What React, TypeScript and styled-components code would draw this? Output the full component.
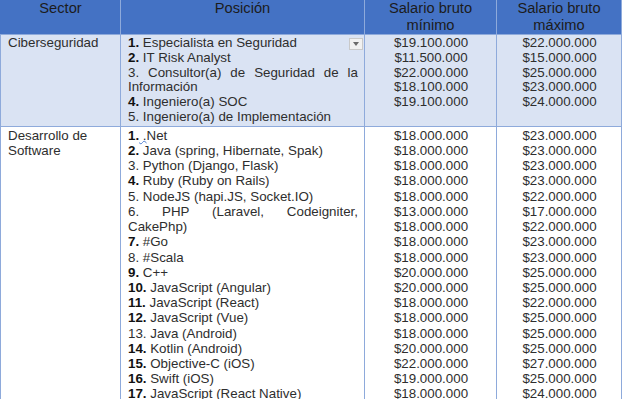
import styled, { createGlobalStyle } from "styled-components";

const GlobalStyle = createGlobalStyle`
  html, body {
    margin: 0;
    padding: 0;
    background: #ffffff;
    overflow: hidden;
  }
  body {
    font-family: "Liberation Sans", Arial, sans-serif;
  }
`;

const Table = styled.table`
  border-collapse: collapse;
  table-layout: fixed;
  width: 621px;
  font-family: "Liberation Sans", Arial, sans-serif;
`;

const HeadCell = styled.th`
  background: #4472c4;
  color: #1c1c1c;
  font-weight: normal;
  font-size: 14.67px;
  line-height: 16.9px;
  height: 33px;
  padding: 0 4px;
  vertical-align: top;
  text-align: center;
  border: 1px solid #8eaadb;
  border-top: none;
  border-left-color: #4472c4;
`;

const Row = styled.tr<{ $shade?: boolean }>`
  background: ${(p) => (p.$shade ? "#dae3f3" : "#ffffff")};
`;

const Cell = styled.td<{ $lh: number; $center?: boolean }>`
  position: relative;
  vertical-align: top;
  padding: 1px 6px 1px 7px;
  font-size: 13.33px;
  line-height: ${(p) => p.$lh}px;
  color: #2e2e2e;
  text-align: ${(p) => (p.$center ? "center" : "left")};
  border: 1px solid #8eaadb;
`;

const Item = styled.div`
  text-align: justify;
`;

const Num = styled.span<{ $bold?: boolean }>`
  font-weight: ${(p) => (p.$bold ? "bold" : "normal")};
  color: ${(p) => (p.$bold ? "#111" : "#2e2e2e")};
`;

// spell-check mark under the stray dot before "Net"
const Squiggle = styled.span`
  text-decoration: underline wavy #4a7bd0;
  text-decoration-thickness: 1px;
  text-underline-offset: 0px;
`;

const Money = styled.div``;

const DropButton = styled.span`
  position: absolute;
  top: 3px;
  right: 1px;
  width: 14px;
  height: 12px;
  box-sizing: border-box;
  background: #f1f1f1;
  border: 1px solid #c9c9c9;
  display: flex;
  align-items: center;
  justify-content: center;
  &::after {
    content: "";
    border-left: 3.5px solid transparent;
    border-right: 3.5px solid transparent;
    border-top: 4px solid #6a6a6a;
  }
`;

type Position = { n: number; bold: boolean; text: string; net?: boolean };

type Sector = {
  name: string;
  shade: boolean;
  lh: number;
  dropdown?: boolean;
  positions: Position[];
  min: string[];
  max: string[];
};

const sectors: Sector[] = [
  {
    name: "Ciberseguridad",
    shade: true,
    lh: 14.85,
    dropdown: true,
    positions: [
      { n: 1, bold: true, text: "Especialista en Seguridad" },
      { n: 2, bold: true, text: "IT Risk Analyst" },
      { n: 3, bold: false, text: "Consultor(a) de Seguridad de la Información" },
      { n: 4, bold: true, text: "Ingeniero(a) SOC" },
      { n: 5, bold: false, text: "Ingeniero(a) de Implementación" },
    ],
    min: ["19.100.000", "11.500.000", "22.000.000", "18.100.000", "19.100.000"],
    max: ["22.000.000", "15.000.000", "25.000.000", "23.000.000", "24.000.000"],
  },
  {
    name: "Desarrollo de Software",
    shade: false,
    lh: 15.2,
    positions: [
      { n: 1, bold: true, text: "Net", net: true },
      { n: 2, bold: true, text: "Java (spring, Hibernate, Spak)" },
      { n: 3, bold: false, text: "Python (Django, Flask)" },
      { n: 4, bold: true, text: "Ruby (Ruby on Rails)" },
      { n: 5, bold: false, text: "NodeJS (hapi.JS, Socket.IO)" },
      { n: 6, bold: false, text: "PHP (Laravel, Codeigniter, CakePhp)" },
      { n: 7, bold: true, text: "#Go" },
      { n: 8, bold: false, text: "#Scala" },
      { n: 9, bold: true, text: "C++" },
      { n: 10, bold: true, text: "JavaScript (Angular)" },
      { n: 11, bold: true, text: "JavaScript (React)" },
      { n: 12, bold: true, text: "JavaScript (Vue)" },
      { n: 13, bold: false, text: "Java (Android)" },
      { n: 14, bold: true, text: "Kotlin (Android)" },
      { n: 15, bold: true, text: "Objective-C (iOS)" },
      { n: 16, bold: true, text: "Swift (iOS)" },
      { n: 17, bold: true, text: "JavaScript (React Native)" },
    ],
    min: [
      "18.000.000", "18.000.000", "18.000.000", "18.000.000", "18.000.000",
      "13.000.000", "18.000.000", "18.000.000", "18.000.000", "20.000.000",
      "20.000.000", "18.000.000", "18.000.000", "18.000.000", "20.000.000",
      "22.000.000", "19.000.000", "18.000.000",
    ],
    max: [
      "23.000.000", "23.000.000", "23.000.000", "23.000.000", "22.000.000",
      "17.000.000", "22.000.000", "23.000.000", "23.000.000", "25.000.000",
      "25.000.000", "22.000.000", "25.000.000", "25.000.000", "25.000.000",
      "27.000.000", "25.000.000", "24.000.000",
    ],
  },
];

function App() {
  return (
    <>
      <GlobalStyle />
      <Table>
        <colgroup>
          <col style={{ width: 120 }} />
          <col style={{ width: 244 }} />
          <col style={{ width: 132 }} />
          <col style={{ width: 125 }} />
        </colgroup>
        <thead>
          <tr>
            <HeadCell>Sector</HeadCell>
            <HeadCell>Posición</HeadCell>
            <HeadCell>
              Salario bruto
              <br />
              mínimo
            </HeadCell>
            <HeadCell>
              Salario bruto
              <br />
              máximo
            </HeadCell>
          </tr>
        </thead>
        <tbody>
          {sectors.map((s) => (
            <Row key={s.name} $shade={s.shade}>
              <Cell $lh={s.lh}>{s.name}</Cell>
              <Cell $lh={s.lh}>
                {s.dropdown && <DropButton />}
                {s.positions.map((p) => (
                  <Item key={p.n}>
                    <Num $bold={p.bold}>{p.n}.</Num>
                    {p.net ? (
                      <>
                        <Squiggle> .</Squiggle>
                        {p.text}
                      </>
                    ) : (
                      " " + p.text
                    )}
                  </Item>
                ))}
              </Cell>
              <Cell $lh={s.lh} $center>
                {s.min.map((m, i) => (
                  <Money key={i}>${m}</Money>
                ))}
              </Cell>
              <Cell $lh={s.lh} $center>
                {s.max.map((m, i) => (
                  <Money key={i}>${m}</Money>
                ))}
              </Cell>
            </Row>
          ))}
        </tbody>
      </Table>
    </>
  );
}

export default App;
